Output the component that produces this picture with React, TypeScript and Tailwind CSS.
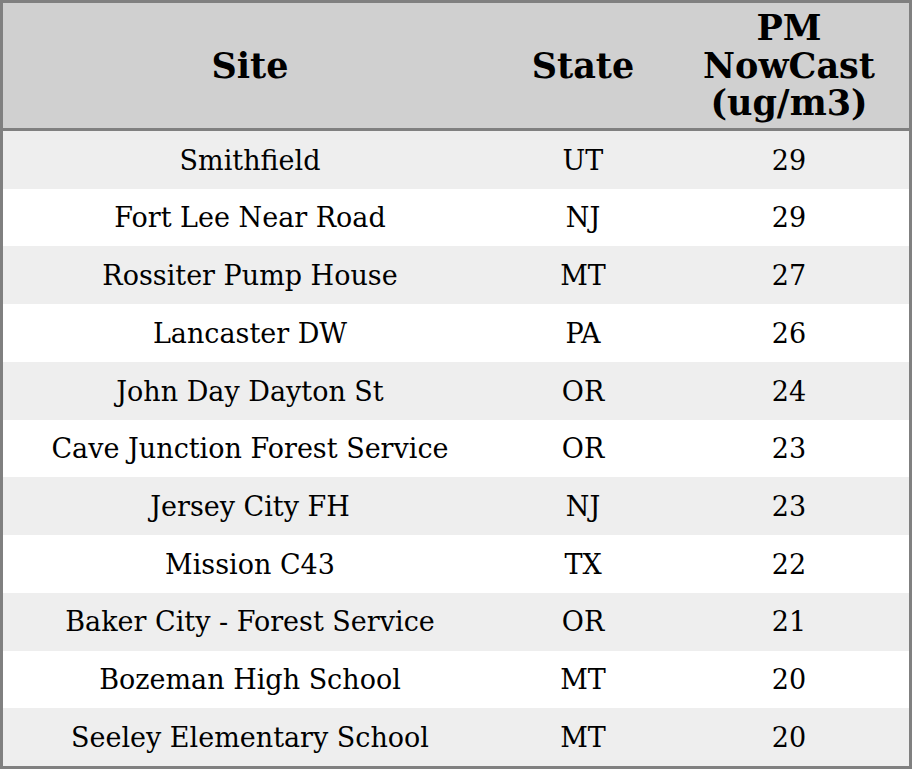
import React from "react";

const rows: [string, string, string][] = [
  ["Smithfield", "UT", "29"],
  ["Fort Lee Near Road", "NJ", "29"],
  ["Rossiter Pump House", "MT", "27"],
  ["Lancaster DW", "PA", "26"],
  ["John Day Dayton St", "OR", "24"],
  ["Cave Junction Forest Service", "OR", "23"],
  ["Jersey City FH", "NJ", "23"],
  ["Mission C43", "TX", "22"],
  ["Baker City - Forest Service", "OR", "21"],
  ["Bozeman High School", "MT", "20"],
  ["Seeley Elementary School", "MT", "20"],
];

export default function App() {
  return (
    <div
      className="w-[912px] h-[769px] border-[3px] border-[#808080] bg-white text-black flex flex-col"
      style={{ fontFamily: '"DejaVu Serif", serif' }}
    >
      <div className="h-[128px] shrink-0 bg-[#d0d0d0] border-b-[3px] border-[#808080] grid grid-cols-[494px_172px_240px] items-center text-center font-bold text-[35px] leading-[37.5px]">
        <div>Site</div>
        <div>State</div>
        <div>
          PM
          <br />
          NowCast
          <br />
          (ug/m3)
        </div>
      </div>
      <div className="flex-1 flex flex-col">
        {rows.map((r, i) => (
          <div
            key={i}
            className={`flex-1 grid grid-cols-[494px_172px_240px] items-center text-center text-[27px] pt-[2px] ${
              i % 2 === 0 ? "bg-[#eeeeee]" : "bg-white"
            }`}
          >
            <div>{r[0]}</div>
            <div>{r[1]}</div>
            <div>{r[2]}</div>
          </div>
        ))}
      </div>
    </div>
  );
}
